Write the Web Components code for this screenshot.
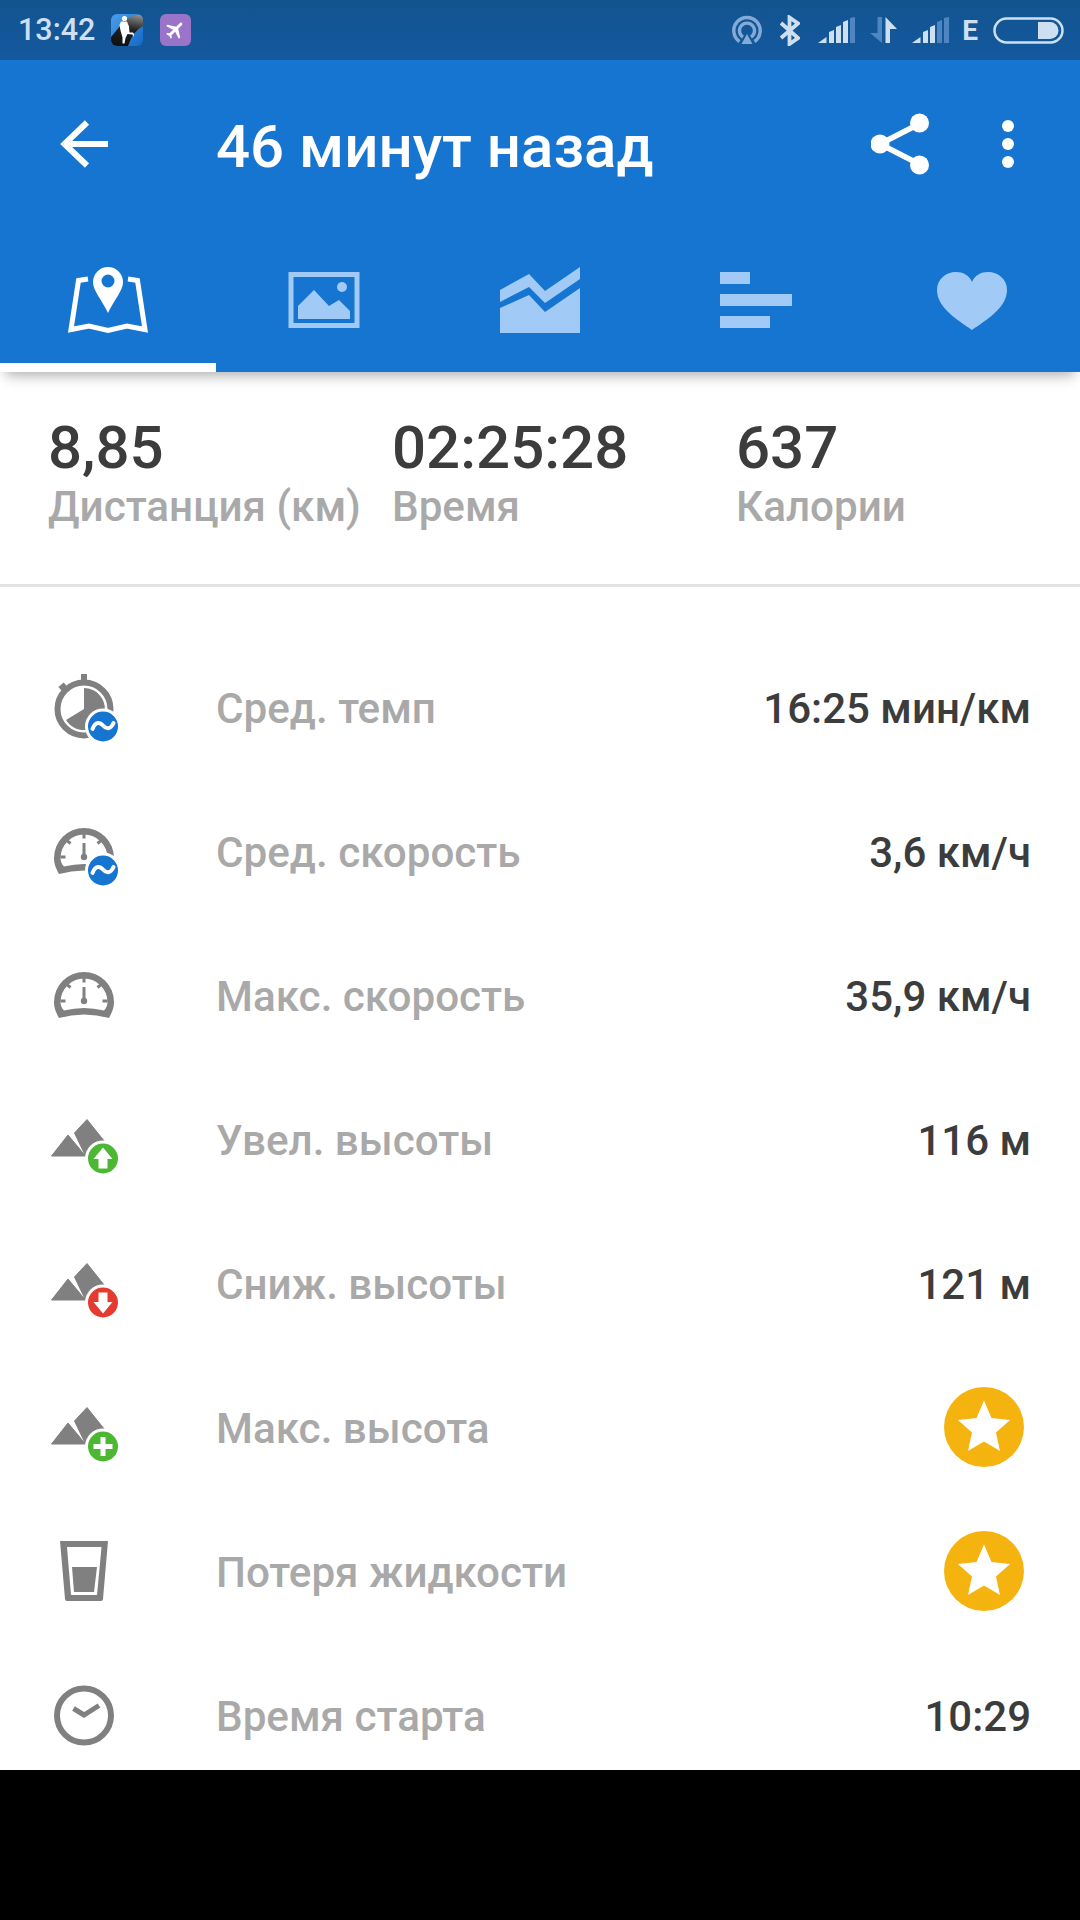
<!doctype html>
<html lang="ru">
<head>
<meta charset="utf-8">
<title>Тренировка</title>
<style>
  html, body { margin: 0; padding: 0; background: #000; }
  body { width: 1080px; height: 1920px; overflow: hidden; font-family: Roboto, "Noto Sans", sans-serif; }
</style>
</head>
<body>
<activity-screen>
  <status-bar slot="status" time="13:42"></status-bar>
  <activity-header slot="header" title="46 минут назад"></activity-header>
  <summary-strip slot="summary">
    <summary-stat value="8,85" label="Дистанция (км)"></summary-stat>
    <summary-stat value="02:25:28" label="Время"></summary-stat>
    <summary-stat value="637" label="Калории"></summary-stat>
  </summary-strip>
  <metric-row label="Сред. темп"><metric-icon slot="icon" name="pace"></metric-icon>16:25 мин/км</metric-row>
  <metric-row label="Сред. скорость"><metric-icon slot="icon" name="avg-speed"></metric-icon>3,6 км/ч</metric-row>
  <metric-row label="Макс. скорость"><metric-icon slot="icon" name="max-speed"></metric-icon>35,9 км/ч</metric-row>
  <metric-row label="Увел. высоты"><metric-icon slot="icon" name="climb"></metric-icon>116 м</metric-row>
  <metric-row label="Сниж. высоты"><metric-icon slot="icon" name="descent"></metric-icon>121 м</metric-row>
  <metric-row label="Макс. высота"><metric-icon slot="icon" name="peak"></metric-icon><star-badge></star-badge></metric-row>
  <metric-row label="Потеря жидкости"><metric-icon slot="icon" name="fluid"></metric-icon><star-badge></star-badge></metric-row>
  <metric-row label="Время старта"><metric-icon slot="icon" name="start"></metric-icon>10:29</metric-row>
</activity-screen>

<script>
  // Small helper: every component renders into an open shadow root.
  class Base extends HTMLElement {
    render(html) {
      if (!this.shadowRoot) this.attachShadow({ mode: 'open' });
      this.shadowRoot.innerHTML = html;
    }
  }

  customElements.define('activity-screen', class extends Base {
    connectedCallback() {
      this.render(`<style>
        :host { display: flex; flex-direction: column; width: 1080px; height: 1920px; background: #000; }
        .sheet { height: 1770px; background: #fff; overflow: hidden; display: flex; flex-direction: column; }
        .list { display: flex; flex-direction: column; padding-top: 50px; }
      </style>
      <div class="sheet">
        <slot name="status"></slot>
        <slot name="header"></slot>
        <slot name="summary"></slot>
        <div class="list"><slot></slot></div>
      </div>`);
    }
  });

  customElements.define('status-bar', class extends Base {
    connectedCallback() {
      const bright = '#cfdff2', dim = '#4f86c2';
      // Signal meter: a wedge, then four rising bars; bars from dimFrom onward are unlit.
      const signal = (dimFrom) => {
        const xs = [11, 18, 25, 32], tops = [13, 8, 3, 0], steps = [2, 2, 2, 1];
        const bars = xs.map((x, i) => `<path d="M${x} 26 V${tops[i] + steps[i]} L${x + 5} ${tops[i]} V26Z" fill="${i >= dimFrom ? dim : bright}"/>`).join('');
        return `<svg width="37" height="26" viewBox="0 0 37 26"><path d="M0 26 L8.500 20 V26Z" fill="${bright}"/>${bars}</svg>`;
      };
      this.render(`<style>
        :host { display: flex; align-items: center; height: 60px; flex: none; background: linear-gradient(#13548f, #14599f); box-sizing: border-box; padding: 0 16px 0 18px; color: ${bright}; }
        .time { font: 500 30.500px/60px Roboto, sans-serif; width: 93px; }
        svg { display: block; flex: none; }
        .apps { display: flex; gap: 17px; }
        .sys { margin-left: auto; display: flex; align-items: center; }
        .e { font: 700 28px/30px Roboto, sans-serif; margin: 1px 15px 0 13px; }
      </style>
      <span class="time">${this.getAttribute('time')}</span>
      <div class="apps">
        <svg width="32" height="32" viewBox="0 0 32 32">
          <defs>
            <linearGradient id="band" x1="0.6" y1="0" x2="0.4" y2="1"><stop offset="0" stop-color="#8a8a8a"/><stop offset=".45" stop-color="#222"/><stop offset="1" stop-color="#111"/></linearGradient>
            <linearGradient id="sky" x1="0" y1="0" x2="1" y2="1"><stop offset="0" stop-color="#4a9eea"/><stop offset="1" stop-color="#1668c4"/></linearGradient>
            <clipPath id="tile"><rect width="32" height="32" rx="6"/></clipPath>
          </defs>
          <g clip-path="url(#tile)">
            <rect width="32" height="32" fill="url(#sky)"/>
            <path d="M0 23 L14 6 Q18 2 32 0 V12 Q22 17 17 32 H0Z" fill="url(#band)"/>
          </g>
          <circle cx="13.500" cy="4.500" r="2.600" fill="#fff"/>
          <path d="M10 7.500 h6 l2 5 .5 6 h3.500 l1 1.500 -.5 3 -1-2.500 -5 -.5 -2 4 -1 5.500 h-2 l0-6 -2-7 -1-5.500z" fill="#fff"/>
        </svg>
        <svg width="31" height="32" viewBox="0 0 31 32">
          <rect width="31" height="32" rx="6" fill="#9a74c9"/>
          <g transform="translate(15.500 16) rotate(45) scale(.95) translate(-12 -12)">
            <path d="M21 16v-2l-8-5V3.500c0-.83-.67-1.500-1.500-1.500S10 2.670 10 3.500V9l-8 5v2l8-2.500V19l-2 1.500V22l3.500-1 3.500 1v-1.500L13 19v-5.500l8 2.500z" fill="#fff"/>
          </g>
        </svg>
      </div>
      <div class="sys">
        <svg width="30" height="30" viewBox="0 0 30 30" style="margin-right:18px" fill="none" stroke="#84abd8" stroke-width="3.400">
          <path d="M7.500 26.500 A13.200 13.200 0 1 1 22.500 26.500"/>
          <path d="M11 22 A7.500 7.500 0 1 1 19 22"/>
          <path d="M15 19 L20.500 29 H9.500Z" fill="#84abd8" stroke="none"/>
        </svg>
        <svg width="20" height="31" viewBox="0 0 20 31" style="margin-right:18px" fill="none" stroke="${bright}" stroke-width="3.800">
          <path d="M1 8 L18 23 L9.500 29 V2.500 L18 8.500 L1 23"/>
        </svg>
        ${signal(3)}
        <svg width="27" height="26" viewBox="0 0 27 26" style="margin:0 15px 0 15px">
          <path d="M7.500 0 h4.500 V26 L0 16 H7.500Z" fill="${dim}"/>
          <path d="M15.500 26 V0 L27 12 H20 V26Z" fill="${bright}"/>
        </svg>
        ${signal(2)}
        <span class="e">E</span>
        <svg width="71" height="27" viewBox="0 0 71 27">
          <rect x="1.500" y="1.500" width="68" height="24" rx="12" fill="none" stroke="${bright}" stroke-width="2.500"/>
          <path d="M45 5 H57 A8.500 8.500 0 0 1 57 22 H45Z" fill="${bright}"/>
        </svg>
      </div>`);
    }
  });

  customElements.define('activity-header', class extends Base {
    connectedCallback() {
      const soft = '#a1cbf6';
      this.render(`<style>
        :host { display: block; flex: none; background: #1675d1; position: relative; z-index: 1;
                box-shadow: 0 10px 12px -6px rgba(0,0,0,.3); }
        .bar { height: 168px; display: flex; align-items: center; box-sizing: border-box; padding-left: 60px; color: #fff; }
        .bar svg { display: block; flex: none; }
        h1 { margin: 0 0 0 108px; font: 500 60px/1 Roboto, sans-serif; flex: 1; position: relative; top: 3px; white-space: nowrap; }
        .tabs { height: 144px; display: grid; grid-template-columns: repeat(5, 216px); }
        .tab { display: flex; align-items: center; justify-content: center; position: relative; }
        .on::after { content: ''; position: absolute; left: 0; right: 0; bottom: 0; height: 9px; background: #fff; }
      </style>
      <div class="bar">
        <svg width="48" height="48" viewBox="0 0 48 48" fill="none" stroke="#fff" stroke-width="6">
          <path d="M48 24 H4"/><path d="M27 2.500 L4.500 24 L27 45.500"/>
        </svg>
        <h1>${this.getAttribute('title')}</h1>
        <svg width="59" height="62" viewBox="1 0 59 62" style="margin-right:71px" fill="#fff" stroke="#fff">
          <path d="M49 11 L10 31 L49 51" fill="none" stroke-width="5.500"/>
          <circle cx="49.500" cy="10" r="9.500" stroke="none"/>
          <circle cx="10" cy="31" r="9.500" stroke="none"/>
          <circle cx="49.500" cy="52" r="9.500" stroke="none"/>
        </svg>
        <svg width="14" height="50" viewBox="0 0 14 50" style="margin-right:65px" fill="#fff">
          <circle cx="7" cy="7" r="6"/><circle cx="7" cy="25" r="6"/><circle cx="7" cy="43" r="6"/>
        </svg>
      </div>
      <div class="tabs">
        <div class="tab on">
          <svg width="88" height="72" viewBox="0 0 88 72">
            <path d="M24 15 L14.500 16.500 L7 65.500 L25 62 L44 66.500 L63 62 L81 65.500 L73.500 16.500 L64 15" fill="none" stroke="#fff" stroke-width="5"/>
            <path fill-rule="evenodd" d="M44 3 A15 15 0 0 1 59 18 C59 27 50 36 44 49 C38 36 29 27 29 18 A15 15 0 0 1 44 3Z M44 10.500 A6.500 6.500 0 1 0 44 23.500 A6.500 6.500 0 1 0 44 10.500Z" fill="#fff"/>
          </svg>
        </div>
        <div class="tab">
          <svg width="88" height="72" viewBox="0 0 88 72">
            <rect x="11" y="10.500" width="66" height="51" fill="none" stroke="${soft}" stroke-width="5"/>
            <path d="M18 55 V42 L34 26 L49 42 L59 36 L70 47 V55Z" fill="${soft}"/>
            <circle cx="62" cy="23" r="5" fill="${soft}"/>
          </svg>
        </div>
        <div class="tab">
          <svg width="88" height="72" viewBox="0 0 88 72" fill="${soft}">
            <path d="M4 26 L33 10 L49 27 L84 3 V15 L49 39 L33 23 L4 38Z"/>
            <path d="M4 44 L33 31 L49 48 L84 24 V69 H4Z"/>
          </svg>
        </div>
        <div class="tab">
          <svg width="88" height="72" viewBox="0 0 88 72" fill="${soft}">
            <rect x="8" y="8" width="30" height="12"/>
            <rect x="8" y="30" width="72" height="12"/>
            <rect x="8" y="52" width="50" height="12"/>
          </svg>
        </div>
        <div class="tab">
          <svg width="88" height="72" viewBox="0 0 88 72">
            <path d="M44 66 C30 56 9 44 9 26 C9 15 18 8 28 8 C35 8 41 11 44 18 C47 11 53 8 60 8 C70 8 79 15 79 26 C79 44 58 56 44 66Z" fill="${soft}"/>
          </svg>
        </div>
      </div>`);
    }
  });

  customElements.define('summary-strip', class extends Base {
    connectedCallback() {
      this.render(`<style>
        :host { display: grid; flex: none; grid-template-columns: repeat(3, 344px); padding: 46px 0 48px 48px; border-bottom: 3px solid #e2e2e2; }
      </style><slot></slot>`);
    }
  });

  customElements.define('summary-stat', class extends Base {
    connectedCallback() {
      this.render(`<style>
        :host { display: block; white-space: nowrap; }
        .v { font: 500 60px/60px Roboto, sans-serif; color: #3c3c3c; }
        .l { font: 500 42.200px/58px Roboto, sans-serif; color: #a9a9a9; }
      </style>
      <div class="v">${this.getAttribute('value')}</div>
      <div class="l">${this.getAttribute('label')}</div>`);
    }
  });

  customElements.define('metric-row', class extends Base {
    connectedCallback() {
      this.render(`<style>
        :host { display: flex; align-items: center; height: 144px; padding: 0 49px 0 44px; font: 500 42px/1 Roboto, sans-serif; }
        .icon { width: 172px; flex: none; display: flex; }
        .label { color: #a9a9a9; flex: 1; font-size: 42.200px; }
        .value { color: #3c3c3c; display: flex; align-items: center; }
      </style>
      <div class="icon"><slot name="icon"></slot></div>
      <div class="label">${this.getAttribute('label')}</div>
      <div class="value"><slot></slot></div>`);
    }
  });

  customElements.define('metric-icon', class extends Base {
    connectedCallback() {
      const grey = '#808080';
      // Status disc in the lower right corner, with a white ring cutting into the glyph.
      const disc = (fill, glyph) => `
        <circle cx="59" cy="57.500" r="18" fill="#fff"/>
        <circle cx="59" cy="57.500" r="15" fill="${fill}"/>
        <g transform="translate(59 57.500)">${glyph}</g>`;
      const wave = `<path d="M-10.500 2.500 C-7.500 -5.500 -3 -4.500 0 -1 C3 2.500 7.500 3.500 10.500 -3.500" fill="none" stroke="#fff" stroke-width="4" stroke-linecap="round"/>`;
      const mountains = `
        <path d="M7.500 55 L24 34 L41.500 55Z" fill="${grey}" stroke="${grey}" stroke-linejoin="round"/>
        <path d="M30.500 32 L43 18.500 L61 41 V60 H44Z" fill="${grey}" stroke="${grey}" stroke-linejoin="round"/>`;
      // Dial: thick rim closed by a bowed base, with ticks and a needle inside.
      const gauge = `
        <path fill-rule="evenodd" fill="${grey}" d="M15 61 C11 54 10 49 10 45 A30 30 0 0 1 70 45 C70 49 69 54 65 61 Q40 54 15 61Z M20 53.500 C17.500 51 16.500 48 16.500 45 A23.500 23.500 0 0 1 63.500 45 C63.500 48 62.500 51 60 53.500 Q40 48.500 20 53.500Z"/>
        <path d="M40 21 V25.500 M23.500 28 L26.500 30.500 M56.500 28 L53.500 30.500 M16.500 44 H21.500 M58.500 44 H63.500" stroke="${grey}" stroke-width="3"/>
        <path d="M40 30 V44" stroke="${grey}" stroke-width="3"/>
        <circle cx="40" cy="44" r="3.200" fill="${grey}"/>`;
      const art = {
        pace: `
          <circle cx="40" cy="40" r="26.500" fill="none" stroke="${grey}" stroke-width="6"/>
          <rect x="37" y="5" width="6" height="7" fill="${grey}"/>
          <rect x="15.500" y="15" width="7" height="6" fill="${grey}" transform="rotate(-40 19 18)"/>
          <path d="M40 40 V19 A21 21 0 1 1 22 51Z" fill="${grey}"/>
          ${disc('#1675d1', wave)}`,
        'avg-speed': `${gauge}${disc('#1675d1', wave)}`,
        'max-speed': gauge,
        climb: `${mountains}${disc('#4db733', '<path d="M0 -11 L9.500 0.500 H4.500 V10 H-4.500 V0.500 H-9.500Z" fill="#fff"/>')}`,
        descent: `${mountains}${disc('#e53a2f', '<path d="M0 11 L9.500 -0.500 H4.500 V-10 H-4.500 V-0.500 H-9.500Z" fill="#fff"/>')}`,
        peak: `${mountains}${disc('#4db733', '<path d="M-9.500 0 H9.500 M0 -9.500 V9.500" stroke="#fff" stroke-width="5"/>')}`,
        fluid: `
          <path d="M16 8 H64 L59 66 Q59 68 57 68 H23 Q21 68 21 66Z" fill="${grey}"/>
          <path d="M23 14 H57.500 L53 62 H27Z" fill="#fff"/>
          <path d="M28 34 H53 L50 59 H30Z" fill="${grey}"/>`,
        start: `
          <circle cx="40" cy="38.500" r="27" fill="none" stroke="${grey}" stroke-width="6"/>
          <path d="M29.500 31.500 L40 38 L55 28.500" fill="none" stroke="${grey}" stroke-width="5"/>`
      };
      this.render(`<style>
        :host { display: block; width: 80px; height: 80px; }
        svg { display: block; }
      </style><svg width="80" height="80" viewBox="0 0 80 80">${art[this.getAttribute('name')]}</svg>`);
    }
  });

  customElements.define('star-badge', class extends Base {
    connectedCallback() {
      this.render(`<style>
        :host { display: block; width: 80px; height: 80px; margin: 0 7px 4px 0; }
        svg { display: block; }
      </style>
      <svg width="80" height="80" viewBox="0 0 80 80">
        <circle cx="40" cy="40" r="40" fill="#f4b30f"/>
        <path d="M40 13.500 L47.500 31 L66 33 L52 45.500 L56 64 L40 54.500 L24 64 L28 45.500 L14 33 L32.500 31Z" fill="#fff"/>
      </svg>`);
    }
  });
</script>
</body>
</html>
